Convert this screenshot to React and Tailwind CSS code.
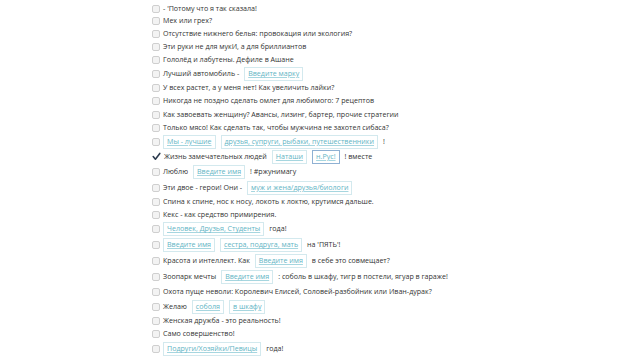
import React from "react";

const Box = ({ children, focus }) => (
  <span
    className={`inline-flex items-center h-[14px] px-[3px] border ${focus ? "border-[#8fb1d3]" : "border-[#d3e9ee]"} text-[#5fb4c4] underline decoration-[#a6d6df]`}
  >
    {children}
  </span>
);

const Check = ({ checked }) =>
  checked ? (
    <svg width="9" height="9" viewBox="0 0 9 9" className="shrink-0">
      <path d="M1.2 4.6 L3.4 7.2 L7.8 1.4" stroke="#2d3b4f" strokeWidth="1.6" fill="none" strokeLinecap="round" strokeLinejoin="round" />
    </svg>
  ) : (
    <span className="inline-block w-[8px] h-[8px] rounded-[2px] border border-[#cfcfcf] bg-[#f3f3f3] shrink-0" />
  );

const H = {
  12: "h-[12px]",
  13: "h-[13px]",
  14: "h-[14px]",
  15: "h-[15px]",
  16: "h-[16px]",
};

const rows = [
  { h: 13, c: [["t", "- Хочу, чтобы всё было как у людей!"]] },
  { h: 13, c: [["t", "- 'Потому что я так сказала!"]] },
  { h: 12, c: [["t", "Мех или грех?"]] },
  { h: 13, c: [["t", "Отсутствие нижнего белья: провокация или экология?"]] },
  { h: 13, c: [["t", "Эти руки не для мукИ, а для бриллиантов"]] },
  { h: 13, c: [["t", "Гололёд и лабутены. Дефиле в Ашане"]] },
  { h: 15, c: [["t", "Лучший автомобиль -"], ["b", "Введите марку"]] },
  { h: 13, c: [["t", "У всех растет, а у меня нет! Как увеличить лайки?"]] },
  { h: 14, c: [["t", "Никогда не поздно сделать омлет для любимого: 7 рецептов"]] },
  { h: 13, c: [["t", "Как завоевать женщину? Авансы, лизинг, бартер, прочие стратегии"]] },
  { h: 13, c: [["t", "Только мясо! Как сделать так, чтобы мужчина не захотел сибаса?"]] },
  { h: 15, c: [["b", "Мы - лучшие"], ["b", "друзья, супруги, рыбаки, путешественники"], ["t", "!"]] },
  { h: 15, checked: true, c: [["t", "Жизнь замечательных людей"], ["b", "Наташи"], ["f", "н.Рус!"], ["t", "! вместе"]] },
  { h: 16, c: [["t", "Люблю"], ["b", "Введите имя"], ["t", "! #ржунимагу"]] },
  { h: 15, c: [["t", "Эти двое - герои! Они -"], ["b", "муж и жена/друзья/биологи"]] },
  { h: 13, c: [["t", "Спина к спине, нос к носу, локоть к локтю, крутимся дальше."]] },
  { h: 13, c: [["t", "Кекс - как средство примирения."]] },
  { h: 16, c: [["b", "Человек, Друзья, Студенты"], ["t", "года!"]] },
  { h: 16, c: [["b", "Введите имя"], ["b", "сестра, подруга, мать"], ["t", "на 'ПЯТЬ'!"]] },
  { h: 16, c: [["t", "Красота и интеллект. Как"], ["b", "Введите имя"], ["t", "в себе это совмещает?"]] },
  { h: 16, c: [["t", "Зоопарк мечты"], ["b", "Введите имя"], ["t", ": соболь в шкафу, тигр в постели, ягуар в гараже!"]] },
  { h: 14, c: [["t", "Охота пуще неволи: Королевич Елисей, Соловей-разбойник или Иван-дурак?"]] },
  { h: 15, c: [["t", "Желаю"], ["b", "соболя"], ["b", "в шкафу"]] },
  { h: 13, c: [["t", "Женская дружба - это реальность!"]] },
  { h: 14, c: [["t", "Само совершенство!"]] },
  { h: 16, c: [["b", "Подруги/Хозяйки/Певицы"], ["t", "года!"]] },
];

export default function App() {
  return (
    <div
      className="w-[640px] h-[360px] overflow-hidden bg-white text-[#333] text-[7.1px] leading-none"
      style={{ fontFamily: '"Open Sans", "Noto Sans", sans-serif' }}
    >
      <div className="pl-[152px] mt-[-11px] flex flex-col">
        {rows.map((r, i) => (
          <div key={i} className={`flex items-center gap-[3px] ${H[r.h]}`}>
            <Check checked={r.checked} />
            <div className="flex items-center gap-[5px]">
              {r.c.map(([k, v], j) =>
                k === "t" ? (
                  <span key={j} className="whitespace-nowrap">{v}</span>
                ) : (
                  <Box key={j} focus={k === "f"}>{v}</Box>
                )
              )}
            </div>
          </div>
        ))}
        <div className="h-[13px] flex items-center ml-[-5px] text-[#e0312f] whitespace-nowrap">
          Вы выбрали меньше 5 заголовков. Выберите еще :)
        </div>
      </div>
    </div>
  );
}
